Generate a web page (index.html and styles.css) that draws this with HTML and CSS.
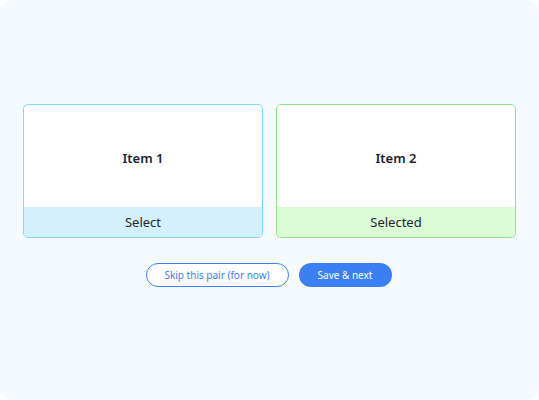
FILE: index.html
```html
<!DOCTYPE html>
<html>
<head>
<meta charset="utf-8">
<link rel="stylesheet" href="styles.css">
</head>
<body>
<div class="page">
  <div class="pair">
    <div class="card card-blue">
      <div class="card-body">Item 1</div>
      <div class="card-band">Select</div>
    </div>
    <div class="card card-green">
      <div class="card-body">Item 2</div>
      <div class="card-band">Selected</div>
    </div>
  </div>
  <div class="actions">
    <button class="btn btn-outline">Skip this pair (for now)</button>
    <button class="btn btn-solid">Save &amp; next</button>
  </div>
</div>
</body>
</html>
```

FILE: styles.css
```css
html, body {
  margin: 0;
  padding: 0;
  background: #ffffff;
}
body {
  font-family: "Noto Sans", "Open Sans", sans-serif;
}
.page {
  box-sizing: border-box;
  width: 539px;
  height: 400px;
  background: #f5faff;
  border-radius: 12px;
  padding: 104px 23px 0 23px;
}
.pair {
  display: grid;
  grid-template-columns: 1fr 1fr;
  gap: 13px;
}
.card {
  border: 1px solid #85d7fb;
  border-radius: 5px;
  overflow: hidden;
  background: #ffffff;
  display: flex;
  flex-direction: column;
}
.card-green {
  border-color: #8ee48a;
}
.card-body {
  box-sizing: border-box;
  height: 102px;
  padding-top: 3px;
  display: flex;
  align-items: center;
  justify-content: center;
  font-size: 13px;
  font-weight: 600;
  color: #1c2335;
}
.card-band {
  height: 30px;
  display: flex;
  align-items: center;
  justify-content: center;
  font-size: 13px;
  color: #1f2430;
  background: #d4f0fd;
}
.card-green .card-band {
  background: #dbfcd4;
}
.actions {
  display: flex;
  justify-content: center;
  gap: 10px;
  margin-top: 25px;
  padding-right: 2px;
}
.btn {
  height: 24px;
  border-radius: 12px;
  font-family: "Noto Sans", "Open Sans", sans-serif;
  font-size: 10px;
  padding: 0;
  display: flex;
  align-items: center;
  justify-content: center;
  box-sizing: border-box;
}
.btn-outline {
  width: 143px;
  border: 1px solid #3b7ff5;
  background: #ffffff;
  color: #3b7ff5;
}
.btn-solid {
  width: 93px;
  border: none;
  background: #3b7ff5;
  color: #ffffff;
}
```
